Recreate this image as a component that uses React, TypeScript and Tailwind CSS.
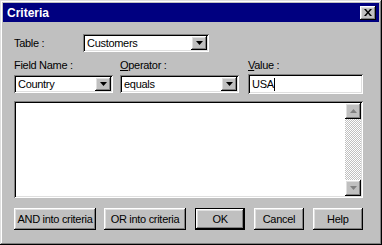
import React from 'react'

const raised =
  'shadow-[inset_-1px_-1px_#000,inset_1px_1px_#fff,inset_-2px_-2px_#808080,inset_2px_2px_#dfdfdf]'
const sunken =
  'shadow-[inset_1px_1px_#808080,inset_-1px_-1px_#fff,inset_2px_2px_#000,inset_-2px_-2px_#dfdfdf]'

function Arrow({ up = false, color = '#000' }: { up?: boolean; color?: string }) {
  return (
    <svg width="7" height="4" viewBox="0 0 7 4" className="block">
      {up ? (
        <path d="M3.5 0 L7 4 L0 4 Z" fill={color} />
      ) : (
        <path d="M0 0 L7 0 L3.5 4 Z" fill={color} />
      )}
    </svg>
  )
}

function Combo({ value, width }: { value: string; width: string }) {
  return (
    <div className={`${width} h-[18px] bg-white ${sunken} flex items-center p-[2px]`}>
      <span className="flex-1 pl-[2px] leading-none">{value}</span>
      <div className={`w-[16px] h-[14px] bg-[#c0c0c0] ${raised} flex items-center justify-center`}>
        <Arrow />
      </div>
    </div>
  )
}

function Button({ label, width, def = false }: { label: string; width: string; def?: boolean }) {
  return (
    <div
      className={`${width} h-[22px] bg-[#c0c0c0] flex items-center justify-center ${
        def
          ? 'shadow-[inset_0_0_0_1px_#000,inset_-2px_-2px_#000,inset_2px_2px_#fff,inset_-3px_-3px_#808080,inset_3px_3px_#dfdfdf]'
          : raised
      }`}
    >
      {label}
    </div>
  )
}

export default function App() {
  return (
    <div
      className="w-[382px] h-[245px] bg-[#c0c0c0] p-[3px] flex flex-col text-[11px] tracking-[-0.3px] text-black shadow-[inset_-1px_-1px_#000,inset_1px_1px_#dfdfdf,inset_-2px_-2px_#808080,inset_2px_2px_#fff]"
      style={{ fontFamily: '"Liberation Sans", Arial, sans-serif' }}
    >
      {/* title bar */}
      <div className="h-[19px] bg-[#000080] flex items-center justify-between pl-[4px] pr-[3px]">
        <span className="text-white font-bold text-[12px] tracking-normal">Criteria</span>
        <div className={`w-[16px] h-[14px] bg-[#c0c0c0] ${raised} flex items-center justify-center`}>
          <svg width="8" height="7" viewBox="0 0 8 7">
            <path d="M0 0 L2 0 L4 2.5 L6 0 L8 0 L5 3.5 L8 7 L6 7 L4 4.5 L2 7 L0 7 L3 3.5 Z" fill="#000" />
          </svg>
        </div>
      </div>

      <div className="flex-1 flex flex-col pl-[11px] pr-[16px]">
        {/* table row */}
        <div className="mt-[12px] h-[18px] flex items-center">
          <span className="w-[69px]">Table :</span>
          <Combo value="Customers" width="w-[126px]" />
        </div>

        {/* labels */}
        <div className="mt-[6px] h-[14px] flex items-center">
          <span className="w-[106px]">Field Name :</span>
          <span className="w-[128px]">
            <span className="underline">O</span>perator :
          </span>
          <span>
            <span className="underline">V</span>alue :
          </span>
        </div>

        {/* fields */}
        <div className="mt-[2px] h-[20px] flex items-center">
          <Combo value="Country" width="w-[99px]" />
          <div className="w-[7px]" />
          <Combo value="equals" width="w-[119px]" />
          <div className="w-[9px]" />
          <div className={`w-[115px] h-[20px] bg-white ${sunken} flex items-center pl-[4px]`}>
            <span className="leading-none">USA</span>
            <span className="w-[1px] h-[13px] bg-black" />
          </div>
        </div>

        {/* list box */}
        <div className={`mt-[7px] h-[97px] w-[349px] bg-white ${sunken} p-[2px] flex justify-end`}>
          <div className="w-[16px] h-full flex flex-col">
            <div className={`w-[16px] h-[16px] bg-[#c0c0c0] ${raised} flex items-center justify-center`}>
              <Arrow up color="#808080" />
            </div>
            <div className="flex-1 bg-[repeating-conic-gradient(#c0c0c0_0%_25%,#fff_0%_50%)] bg-[length:2px_2px]" />
            <div className={`w-[16px] h-[16px] bg-[#c0c0c0] ${raised} flex items-center justify-center`}>
              <Arrow color="#808080" />
            </div>
          </div>
        </div>

        {/* buttons */}
        <div className="mt-[10px] flex items-center">
          <Button label="AND into criteria" width="w-[83px]" />
          <div className="w-[8px]" />
          <Button label="OR into criteria" width="w-[83px]" />
          <div className="w-[9px]" />
          <Button label="OK" width="w-[51px]" def />
          <div className="w-[9px]" />
          <Button label="Cancel" width="w-[50px]" />
          <div className="w-[9px]" />
          <Button label="Help" width="w-[51px]" />
        </div>
      </div>
    </div>
  )
}
